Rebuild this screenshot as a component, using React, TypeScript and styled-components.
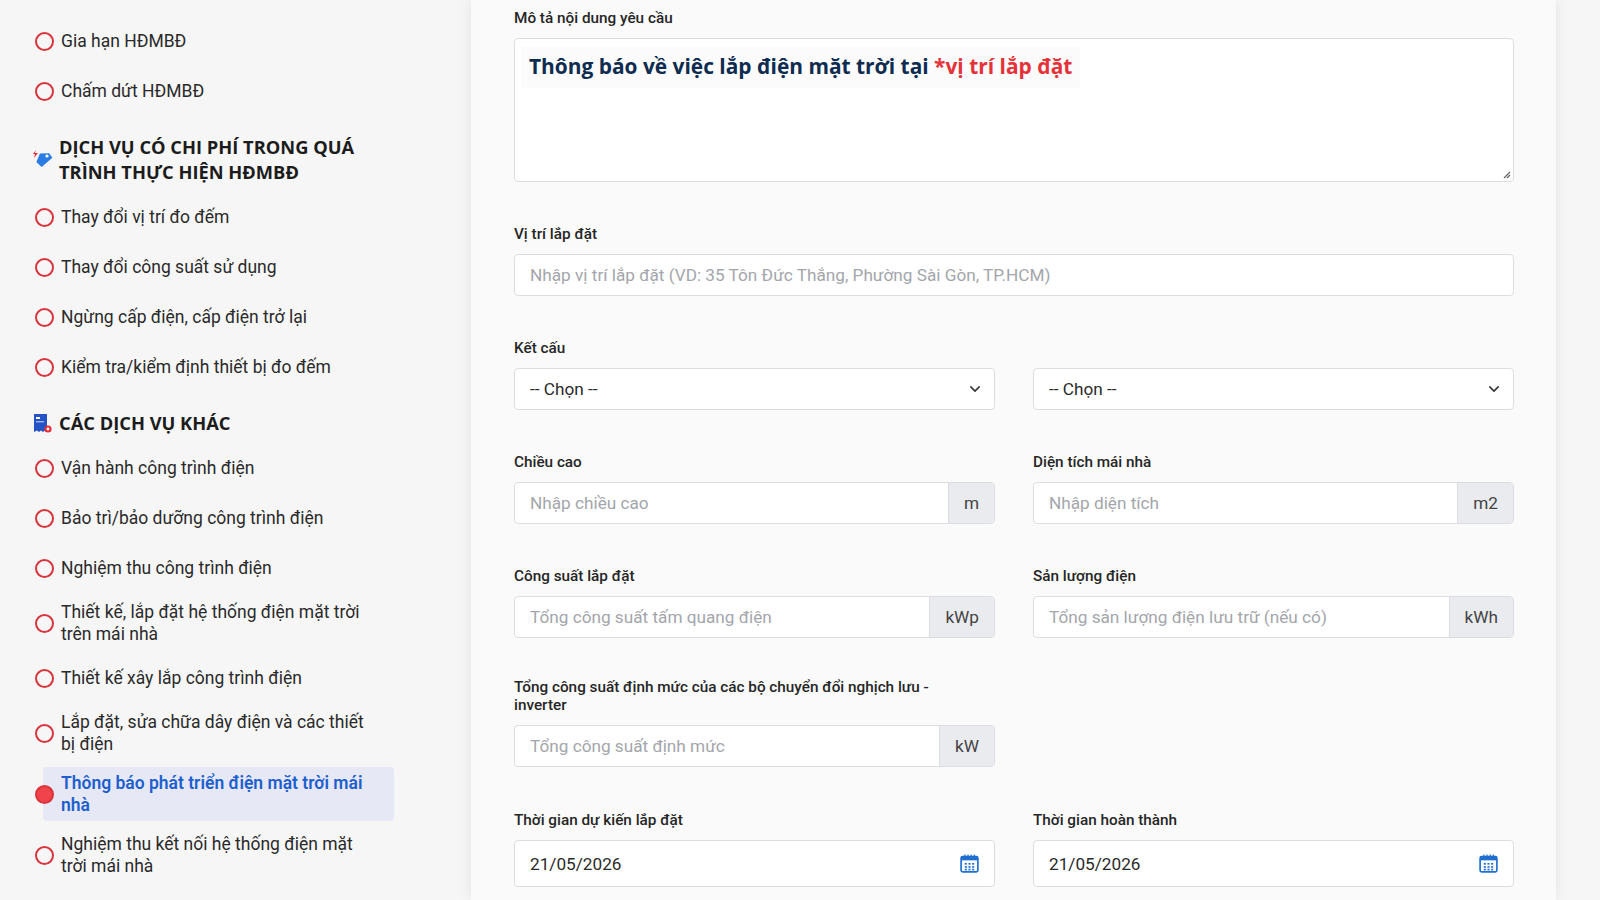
import React from "react";
import styled, { createGlobalStyle } from "styled-components";

const Global = createGlobalStyle`
  html, body { margin: 0; padding: 0; background: #f6f6f6; }
  body { font-family: Roboto, "Noto Sans", sans-serif; color: #222; overflow: hidden; }
  * { box-sizing: border-box; }
`;

const Page = styled.div`
  display: flex;
  width: 1600px;
  height: 900px;
  overflow: hidden;
  background: #f6f6f6;
`;

const Sidebar = styled.aside`
  width: 471px;
  flex: none;
  padding: 16px 0 0 35px;
  display: flex;
  flex-direction: column;
`;

const Item = styled.div<{ $h?: number }>`
  display: flex;
  align-items: center;
  min-height: ${(p) => p.$h ?? 50}px;
`;

const Circle = styled.span<{ $active?: boolean }>`
  width: 19px;
  height: 19px;
  flex: none;
  border-radius: 50%;
  border: 2px solid #d8343c;
  background: ${(p) => (p.$active ? "#f0434b" : "transparent")};
  position: relative;
  z-index: 1;
`;

const ItemText = styled.div<{ $active?: boolean }>`
  margin-left: -11px;
  padding: ${(p) => (p.$active ? "5px 16px 5px 18px" : "0 16px 0 18px")};
  width: 351px;
  font-size: 17.5px;
  line-height: 22px;
  color: ${(p) => (p.$active ? "#1e5fd0" : "#2a2a2a")};
  font-weight: ${(p) => (p.$active ? 600 : 400)};
  background: ${(p) => (p.$active ? "#e6e9f5" : "transparent")};
  border-radius: 4px;
`;

const Heading = styled.div`
  display: flex;
  align-items: center;
  gap: 5px;
  margin-left: -5px;
  padding: 18px 0 8px;
  font-family: "Open Sans", sans-serif;
  font-weight: 700;
  font-size: 18.3px;
  line-height: 25px;
  color: #1c1c1c;
  text-transform: uppercase;
  width: 365px;
`;

const HeadIcon = styled.svg`
  width: 24px;
  height: 24px;
  flex: none;
`;

const Main = styled.main`
  width: 1085px;
  flex: none;
  background: #fafafa;
  box-shadow: 0 0 14px rgba(0, 0, 0, 0.08);
  padding: 9px 42px 0 43px;
  display: flex;
  flex-direction: column;
`;

const Grid = styled.div`
  display: grid;
  grid-template-columns: 481px 481px;
  column-gap: 38px;
  align-items: end;
`;

const Field = styled.div<{ $full?: boolean; $mt?: number }>`
  grid-column: ${(p) => (p.$full ? "1 / -1" : "auto")};
  margin-top: ${(p) => p.$mt ?? 0}px;
  display: flex;
  flex-direction: column;
`;

const Label = styled.label`
  font-size: 15.3px;
  font-weight: 500;
  color: #262626;
  line-height: 18px;
  margin-bottom: 11px;
  min-height: 18px;
`;

const TextArea = styled.div`
  position: relative;
  height: 144px;
  background: #fff;
  border: 1px solid #dcdde0;
  border-radius: 4px;
  padding: 8px 6px;
`;

const Highlight = styled.div`
  display: inline-block;
  padding: 5px 8px 8px;
  background: #fbfbfb;
  font-family: "Open Sans", sans-serif;
  font-weight: 700;
  font-size: 20.9px;
  color: #0e2b50;
`;

const Red = styled.span`
  color: #e53238;
`;

const Grip = styled.svg`
  position: absolute;
  right: 2px;
  bottom: 2px;
  width: 10px;
  height: 10px;
`;

const InputBox = styled.div<{ $h?: number }>`
  display: flex;
  height: ${(p) => p.$h ?? 42}px;
  background: #fff;
  border: 1px solid #dcdde0;
  border-radius: 4px;
  overflow: hidden;
  align-items: center;
`;

const InputText = styled.div<{ $ph?: boolean }>`
  flex: 1;
  padding: 0 15px;
  font-size: 17.2px;
  color: ${(p) => (p.$ph ? "#a3a6ab" : "#2a2a2a")};
  white-space: nowrap;
`;

const Addon = styled.div`
  align-self: stretch;
  display: flex;
  align-items: center;
  padding: 0 15px;
  background: #e9ebee;
  border-left: 1px solid #dcdde0;
  font-size: 17.2px;
  color: #444;
`;

const TrailIcon = styled.svg`
  width: 21px;
  height: 21px;
  margin-right: 14px;
  flex: none;
`;

const Chevron = () => (
  <TrailIcon viewBox="0 0 20 20" style={{ width: 14, height: 14, marginRight: 12 }}>
    <path d="M4 7l6 6 6-6" fill="none" stroke="#333" strokeWidth="2.2" strokeLinecap="round" strokeLinejoin="round" />
  </TrailIcon>
);

const Calendar = () => (
  <TrailIcon viewBox="0 0 20 20">
    <rect x="2" y="3.5" width="16" height="14.5" rx="1.5" fill="#fff" stroke="#1f6fd1" strokeWidth="1.6" />
    <rect x="2" y="3.5" width="16" height="3.5" fill="#1f6fd1" />
    {[5, 8, 11, 14].map((x) => (
      <rect key={x} x={x} y="1.5" width="1.2" height="3" fill="#1f6fd1" />
    ))}
    {[5.5, 9, 12.5].map((x) =>
      [9.5, 12.5, 15].map((y) => <rect key={x + "-" + y} x={x} y={y} width="2" height="1.6" fill="#1f6fd1" />)
    )}
  </TrailIcon>
);

const SideItem = ({ text, h, active }: { text: string; h?: number; active?: boolean }) => (
  <Item $h={h}>
    <Circle $active={active} />
    <ItemText $active={active}>{text}</ItemText>
  </Item>
);

export default function App() {
  return (
    <Page>
      <Global />
      <Sidebar>
        <SideItem text="Gia hạn HĐMBĐ" />
        <SideItem text="Chấm dứt HĐMBĐ" />
        <Heading>
          <HeadIcon viewBox="0 0 24 24">
            <path d="M3 7l3-4-1 3h3l-4 5 1-4z" fill="#e42d35" />
            <path d="M9 7l9-2 4 4-9 11-6-4z" fill="#2a7be4" transform="rotate(10 12 12)" />
            <circle cx="17" cy="9" r="1.6" fill="#fff" />
          </HeadIcon>
          Dịch vụ có chi phí trong quá trình thực hiện HĐMBĐ
        </Heading>
        <SideItem text="Thay đổi vị trí đo đếm" />
        <SideItem text="Thay đổi công suất sử dụng" />
        <SideItem text="Ngừng cấp điện, cấp điện trở lại" />
        <SideItem text="Kiểm tra/kiểm định thiết bị đo đếm" />
        <Heading>
          <HeadIcon viewBox="0 0 24 24">
            <path d="M4 3h13v18l-2-1.5-2 1.5-2-1.5-2 1.5-2-1.5L4 21z" fill="#2453c6" />
            <rect x="6" y="6" width="4" height="2" fill="#fff" />
            <rect x="6" y="10" width="8" height="1.4" fill="#9fb6ee" />
            <circle cx="18" cy="18" r="3.6" fill="#e42d35" />
            <circle cx="18" cy="18" r="1.4" fill="#fff" />
          </HeadIcon>
          Các dịch vụ khác
        </Heading>
        <SideItem text="Vận hành công trình điện" />
        <SideItem text="Bảo trì/bảo dưỡng công trình điện" />
        <SideItem text="Nghiệm thu công trình điện" />
        <SideItem text="Thiết kế, lắp đặt hệ thống điện mặt trời trên mái nhà" h={60} />
        <SideItem text="Thiết kế xây lắp công trình điện" />
        <SideItem text="Lắp đặt, sửa chữa dây điện và các thiết bị điện" h={60} />
        <SideItem text="Thông báo phát triển điện mặt trời mái nhà" h={62} active />
        <SideItem text="Nghiệm thu kết nối hệ thống điện mặt trời mái nhà" h={60} />
      </Sidebar>

      <Main>
        <Grid>
          <Field $full>
            <Label>Mô tả nội dung yêu cầu</Label>
            <TextArea>
              <Highlight>
                Thông báo về việc lắp điện mặt trời tại <Red>*vị trí lắp đặt</Red>
              </Highlight>
              <Grip viewBox="0 0 10 10">
                <path d="M9 3L3 9M9 6L6 9" stroke="#666" strokeWidth="1.2" />
              </Grip>
            </TextArea>
          </Field>
          <Field $full $mt={43}>
            <Label>Vị trí lắp đặt</Label>
            <InputBox>
              <InputText $ph>Nhập vị trí lắp đặt (VD: 35 Tôn Đức Thắng, Phường Sài Gòn, TP.HCM)</InputText>
            </InputBox>
          </Field>
          <Field $mt={43}>
            <Label>Kết cấu</Label>
            <InputBox>
              <InputText>-- Chọn --</InputText>
              <Chevron />
            </InputBox>
          </Field>
          <Field $mt={43}>
            <Label> </Label>
            <InputBox>
              <InputText>-- Chọn --</InputText>
              <Chevron />
            </InputBox>
          </Field>
          <Field $mt={43}>
            <Label>Chiều cao</Label>
            <InputBox>
              <InputText $ph>Nhập chiều cao</InputText>
              <Addon>m</Addon>
            </InputBox>
          </Field>
          <Field $mt={43}>
            <Label>Diện tích mái nhà</Label>
            <InputBox>
              <InputText $ph>Nhập diện tích</InputText>
              <Addon>m2</Addon>
            </InputBox>
          </Field>
          <Field $mt={43}>
            <Label>Công suất lắp đặt</Label>
            <InputBox>
              <InputText $ph>Tổng công suất tấm quang điện</InputText>
              <Addon>kWp</Addon>
            </InputBox>
          </Field>
          <Field $mt={43}>
            <Label>Sản lượng điện</Label>
            <InputBox>
              <InputText $ph>Tổng sản lượng điện lưu trữ (nếu có)</InputText>
              <Addon>kWh</Addon>
            </InputBox>
          </Field>
          <Field $mt={40}>
            <Label style={{ maxWidth: 440 }}>
              Tổng công suất định mức của các bộ chuyển đổi nghịch lưu - inverter
            </Label>
            <InputBox>
              <InputText $ph>Tổng công suất định mức</InputText>
              <Addon>kW</Addon>
            </InputBox>
          </Field>
          <div />
          <Field $mt={44}>
            <Label>Thời gian dự kiến lắp đặt</Label>
            <InputBox $h={47}>
              <InputText>21/05/2026</InputText>
              <Calendar />
            </InputBox>
          </Field>
          <Field $mt={44}>
            <Label>Thời gian hoàn thành</Label>
            <InputBox $h={47}>
              <InputText>21/05/2026</InputText>
              <Calendar />
            </InputBox>
          </Field>
        </Grid>
      </Main>
    </Page>
  );
}
